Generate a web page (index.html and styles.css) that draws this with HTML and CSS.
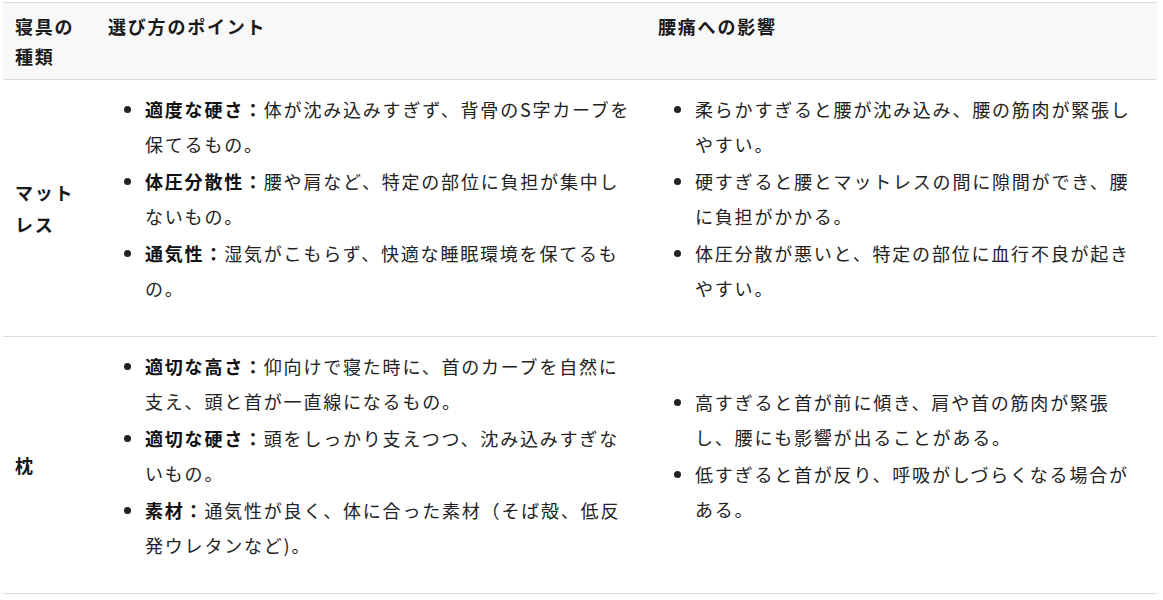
FILE: index.html
```html
<!DOCTYPE html>
<html lang="ja">
<head>
<meta charset="utf-8">
<link rel="stylesheet" href="styles.css">
</head>
<body>
<table class="bedding">
  <colgroup>
    <col class="c-type">
    <col class="c-point">
    <col class="c-effect">
  </colgroup>
  <thead>
    <tr>
      <th>寝具の種類</th>
      <th>選び方のポイント</th>
      <th>腰痛への影響</th>
    </tr>
  </thead>
  <tbody>
    <tr>
      <td class="name">マットレス</td>
      <td>
        <ul>
          <li><strong>適度な硬さ：</strong>体が沈み込みすぎず、背骨のS字カーブを保てるもの。</li>
          <li><strong>体圧分散性：</strong>腰や肩など、特定の部位に負担が集中しないもの。</li>
          <li><strong>通気性：</strong>湿気がこもらず、快適な睡眠環境を保てるもの。</li>
        </ul>
      </td>
      <td>
        <ul>
          <li>柔らかすぎると腰が沈み込み、腰の筋肉が緊張しやすい。</li>
          <li>硬すぎると腰とマットレスの間に隙間ができ、腰に負担がかかる。</li>
          <li>体圧分散が悪いと、特定の部位に血行不良が起きやすい。</li>
        </ul>
      </td>
    </tr>
    <tr>
      <td class="name">枕</td>
      <td>
        <ul>
          <li><strong>適切な高さ：</strong>仰向けで寝た時に、首のカーブを自然に支え、頭と首が一直線になるもの。</li>
          <li><strong>適切な硬さ：</strong>頭をしっかり支えつつ、沈み込みすぎないもの。</li>
          <li><strong>素材：</strong>通気性が良く、体に合った素材（そば殻、低反発ウレタンなど)。</li>
        </ul>
      </td>
      <td>
        <ul>
          <li>高すぎると首が前に傾き、肩や首の筋肉が緊張し、腰にも影響が出ることがある。</li>
          <li>低すぎると首が反り、呼吸がしづらくなる場合がある。</li>
        </ul>
      </td>
    </tr>
  </tbody>
</table>
</body>
</html>
```

FILE: styles.css
```css
html, body {
  background: #ffffff;
}
body {
  margin: 0;
  padding: 2px 6px 0 3px;
  font-family: "Noto Sans CJK JP", "Noto Sans", sans-serif;
  font-size: 18px;
  color: #222222;
}
.bedding {
  width: 100%;
  border-collapse: collapse;
  table-layout: fixed;
  letter-spacing: 0.1em;
}
.c-type { width: 93px; }
.c-point { width: 550px; }
.c-effect { width: auto; }

.bedding th {
  background: #f8f8f8;
  border-top: 1px solid #dddddd;
  border-bottom: 1px solid #dddddd;
  padding: 8px 12px;
  text-align: left;
  vertical-align: top;
  font-weight: 700;
  line-height: 30px;
  color: #1a1a1a;
}
.bedding td {
  border-bottom: 1px solid #dddddd;
  padding: 12px;
  vertical-align: middle;
  line-height: 32px;
}
.bedding td.name {
  font-weight: 700;
  color: #1a1a1a;
}
.bedding ul {
  margin: 0 0 18px;
  padding-left: 37px;
}
.bedding li {
  line-height: 35px;
}
.bedding li + li {
  margin-top: 2px;
}
.bedding strong {
  font-weight: 700;
  color: #111111;
}
```
